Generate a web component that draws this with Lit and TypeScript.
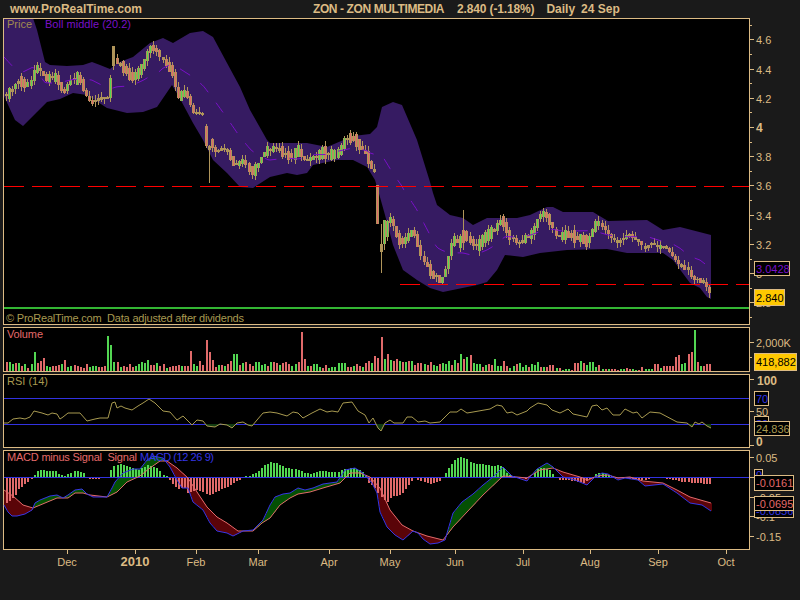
import { LitElement, html, svg, css } from "lit";
import { customElement } from "lit/decorators.js";

type P = [number, number];

const interp = (kp: P[], x: number): number => {
  if (x <= kp[0][0]) return kp[0][1];
  for (let i = 1; i < kp.length; i++) {
    if (x <= kp[i][0]) {
      const [x0, y0] = kp[i - 1];
      const [x1, y1] = kp[i];
      return y0 + ((y1 - y0) * (x - x0)) / (x1 - x0 || 1);
    }
  }
  return kp[kp.length - 1][1];
};

const VOL =
  "9r 9g 7g 8r 8g 5r 7g 3r 7g 19g 8r 10r 13r 5g 4g 5r 5r 6r 7g 11r 4g 5g 6r 5r 4r 3r 7r 4g 5g 5g 4r 4r 5r 35g 26g 9g 9r 4g 5r 4r 7r 4r 5g 7g 9g 8g 11g 6r 6r 8g 5r 7r 3g 4r 5r 5r 6r 5g 5r 5r 20r 7g 5g 10r 6r 31r 19r 11r 4r 6g 6r 5g 7r 10r 17g 17g 6r 8g 9r 7r 5r 9g 9g 6g 7g 5r " +
  "9g 9r 8r 6g 8r 9r 7r 5g 7g 9r 39r 12r 5g 5r 7g 7g 4g 3r 6r 3g 4g 4g 8g 8g 8g 4r 4r 5g 7r 5r 4g 8r 10r 8g 15r 13r 34r 12g 17r 11g 10r 12r 10g 9r 9g 10r 10g 6r 8r 8r 7g 6r 9r 6g 5g 7r 8g 7g 10g 6r 11g 8r 17g 12r 14g 16r 8g 7g 7g 4r 6g 7r 6r 12g 5g 5g 10r 5r 3g 5g 7r 8g 4g 6g 4r 7g 6g 9g " +
  "4r 4g 4r 6r 6r 3g 3r 1g 2g 2g 1r 8r 8r 10g 8r 6g 9g 9g 4g 6r 2g 2r 2g 2r 2r 1r 2g 2g 3r 2r 2g 1g 1r 4r 2g 2g 2g 7r 7r 3g 5r 5r 5r 5r 14r 16r 7g 8g 17r 19r 41g 9r 5g 5r 7r 7r";
const vols = VOL.split(" ").map((s) => ({ h: parseInt(s), c: s.endsWith("g") ? "g" : "r" }));
const N = vols.length;
const barX = (i: number) => Math.round(6 + (i * 703) / (N - 1));

const CLOSE: P[] = [
  [7,95],[10,90],[13,88],[17,80],[20,82],[23,84],[30,85],[34,70],[38,67],[42,74],[45,80],[50,77],[57,78],[60,90],[63,93],[68,82],[75,78],[80,80],[83,90],[87,98],[90,103],[97,99],[103,98],[108,98],[112,57],[117,63],[123,68],[128,75],[133,78],[137,72],[140,70],[145,58],[148,48],[152,47],[157,53],[163,60],[167,67],[172,72],[175,87],[178,98],[183,92],[188,97],[192,113],[197,112],[202,115],[207,133],[212,148],[217,152],[222,147],[227,152],[232,163],[237,165],[242,160],[247,167],[252,172],[258,163],[265,150],
  [270,150],[275,147],[283,154],[290,157],[298,150],[303,160],[313,158],[322,152],[330,155],[338,153],[345,138],[352,138],[358,145],[367,157],[370,168],[375,173],[378,205],[382,248],[385,232],[388,215],[393,226],[397,240],[403,242],[407,236],[413,230],[418,251],[423,260],[427,267],[432,277],[437,274],[439,283],[444,273],[447,261],[450,245],[455,237],[458,246],[462,236],[465,235],[470,241],[477,247],[483,237],[487,235],[492,231],[495,228],[500,220],[504,224],[507,237],[513,238],[517,245],[522,240],[525,238],
  [532,232],[535,226],[538,215],[542,213],[545,215],[550,224],[555,234],[560,237],[565,234],[570,235],[575,238],[580,238],[585,243],[590,236],[593,225],[598,223],[604,228],[610,237],[617,243],[625,236],[630,235],[635,240],[640,242],[643,250],[650,243],[657,247],[665,247],[670,253],[675,260],[680,267],[687,268],[692,279],[698,280],[703,282],[708,290],[710,297],
];

const UPPER: P[] = [
  [4,18],[33,18],[37,30],[41,46],[45,62],[50,65],[67,66],[83,65],[92,62],[100,65],[110,69],[117,63],[133,57],[150,43],[163,38],[173,43],[190,33],[203,31],[213,37],[227,63],[240,87],[250,110],[267,140],[270,143],[307,143],[327,147],[353,136],[370,134],[377,127],[382,107],[393,102],[402,105],[417,140],[430,182],[433,193],[437,205],[450,215],[463,218],[473,225],[487,218],[517,218],[530,215],[547,207],[553,207],[563,212],[593,212],[608,221],[647,220],[663,230],[680,227],[711,235],
];
const LOWER: P[] = [
  [4,96],[15,120],[23,126],[37,112],[47,102],[60,99],[73,93],[87,95],[107,108],[127,113],[143,112],[157,107],[172,85],[178,95],[193,123],[203,140],[213,160],[227,173],[240,187],[253,188],[270,177],[287,173],[297,175],[307,173],[313,165],[337,160],[353,160],[367,167],[375,180],[378,190],[385,215],[393,245],[403,270],[417,280],[430,288],[443,292],[477,285],[487,282],[497,270],[505,255],[523,257],[540,253],[567,250],[607,249],[627,253],[663,253],[673,260],[690,283],[700,288],[707,297],[711,299],
];

const RSI: P[] = [
  [4,423],[8,423],[13,419],[20,418],[25,419],[30,417],[34,411],[42,413],[48,415],[52,413],[57,414],[60,419],[63,417],[68,413],[80,413],[87,421],[95,419],[100,418],[108,418],[112,403],[115,402],[117,408],[121,406],[125,408],[132,410],[138,406],[143,403],[149,399],[155,403],[163,411],[170,412],[177,420],[183,416],[192,425],[197,420],[203,421],[207,426],[215,427],[220,424],[227,425],[232,428],[237,423],[243,422],[248,425],[252,426],[257,420],[263,413],
  [270,412],[277,413],[287,416],[293,412],[298,413],[303,418],[312,413],[320,409],[327,412],[332,411],[338,412],[343,403],[352,402],[358,411],[365,415],[369,423],[373,418],[378,428],[381,431],[385,423],[390,420],[394,423],[403,423],[407,417],[412,417],[418,422],[425,421],[430,423],[440,422],[450,412],[457,412],[461,409],[467,413],[473,412],[490,409],[497,405],[502,406],[507,413],[512,412],[517,415],[527,411],
  [530,408],[538,403],[547,405],[552,410],[560,413],[568,409],[573,414],[587,417],[592,406],[597,405],[602,410],[607,408],[613,415],[620,415],[625,409],[633,413],[637,412],[642,418],[650,412],[660,413],[677,422],[687,423],[692,427],[695,422],[699,424],[702,422],[707,426],[711,428],
];

const MACD: P[] = [
  [4,505],[8,512],[12,516],[17,516],[25,514],[32,510],[35,503],[40,500],[50,496],[57,495],[63,498],[68,495],[75,490],[82,489],[87,494],[93,497],[107,497],[112,488],[115,482],[123,473],[133,469],[140,469],[147,460],[153,456],[163,458],[170,467],[177,480],[182,488],[188,488],[193,502],[203,510],[210,523],[217,531],[227,533],[233,536],[243,531],[253,530],[263,520],[270,505],
  [275,497],[283,494],[290,493],[298,488],[305,490],[313,488],[323,484],[337,482],[345,470],[355,468],[363,473],[372,483],[377,493],[380,512],[387,527],[395,535],[403,540],[413,531],[418,533],[423,539],[430,544],[438,543],[445,540],[453,513],[462,502],[473,494],[483,485],[493,477],[503,467],[512,476],[518,478],[527,481],
  [530,477],[537,469],[547,463],[553,467],[563,477],[575,480],[587,485],[595,477],[602,473],[608,474],[618,480],[625,478],[638,480],[645,486],[663,484],[677,493],[690,503],[702,505],[711,511],
];
const SIGNAL: P[] = [
  [4,490],[13,496],[23,505],[33,508],[45,503],[57,498],[68,498],[75,493],[83,493],[90,495],[107,497],[117,492],[127,482],[140,476],[150,468],[160,461],[167,461],[177,468],[188,478],[197,492],[207,507],[217,517],[227,523],[238,531],[253,531],[262,523],[270,518],
  [280,505],[290,498],[298,494],[310,492],[323,488],[340,483],[350,473],[360,473],[370,477],[380,488],[390,510],[402,525],[413,531],[427,536],[443,540],[453,527],[467,512],[483,495],[503,476],[517,477],[527,478],
  [530,476],[540,470],[553,468],[563,472],[580,477],[588,480],[597,476],[608,475],[618,478],[630,477],[643,481],[663,483],[677,490],[690,497],[711,503],
];
const HIST: P[] = [
  [4,-28],[8,-25],[12,-21],[15,-18],[18,-12],[22,-9],[25,-6],[28,-4],[32,-2],[35,4],[38,7],[42,7],[45,6],[50,6],[55,6],[58,3],[63,1],[68,3],[73,6],[78,6],[83,4],[85,0],[90,-2],[97,-2],[100,-1],[107,0],[112,11],[115,11],[121,13],[126,11],[132,9],[138,7],[147,12],[152,11],[157,8],[163,2],[167,0],[170,-4],[173,-8],[177,-12],[180,-12],[183,-9],[187,-16],[190,-15],[193,-14],[197,-13],[200,-14],[203,-16],[207,-18],[210,-18],[213,-17],[217,-14],[220,-13],[223,-11],[227,-10],[230,-8],[233,-6],[237,-4],[240,-2],[242,0],[243,1],[248,1],[253,3],[257,5],[260,8],[263,12],[268,13],
  [270,15],[275,14],[280,12],[285,9],[295,8],[300,6],[305,4],[310,3],[315,5],[322,6],[328,5],[337,5],[345,8],[353,9],[360,7],[365,2],[368,-6],[373,-9],[377,-16],[382,-21],[387,-25],[392,-19],[397,-19],[402,-16],[407,-9],[412,-3],[415,0],[418,-4],[423,-5],[430,-7],[435,-5],[440,-4],[443,0],[447,7],[450,12],[455,18],[461,20],[467,17],[472,14],[478,13],[487,12],[492,11],[497,12],[502,11],[507,2],[515,0],[518,-1],[527,-2],[532,1],
  [537,8],[540,9],[545,9],[550,6],[553,1],[558,-3],[563,-3],[573,-4],[583,-6],[592,0],[595,3],[600,4],[607,3],[612,0],[623,-1],[640,-3],[645,-3],[653,-1],[663,-1],[673,-3],[683,-5],[693,-6],[710,-7],
];

// Candles whose shape is set by hand: x, wick top, body top, body bottom, wick bottom, colour
const SPECIAL: [number, number, number, number, number, string][] = [
  [112, 46, 46, 66, 70, "t"],
  [206, 124, 126, 146, 148, "r"],
  [209, 145, 146, 150, 183, "t"],
  [378, 185, 185, 224, 224, "r"],
  [381, 224, 244, 252, 273, "t"],
  [385, 220, 220, 244, 250, "g"],
  [462, 210, 230, 243, 250, "r"],
  [708, 284, 287, 293, 298, "r"],
  [711, 292, 297, 298, 299, "t"],
];

let seed = 7;
const rnd = () => {
  seed = (seed * 1103515 + 12345) & 0x7fffffff;
  return (seed >> 8) % 1000 / 1000;
};
const candles = vols.map((_, i) => {
  const x = barX(i);
  const sp = SPECIAL.find((s) => Math.abs(s[0] - x) <= 1);
  if (sp) return { x, wt: sp[1], bt: sp[2], bb: sp[3], wb: sp[4], c: sp[5] };
  const close = interp(CLOSE, x);
  const prev = interp(CLOSE, x - 3);
  // Quiet stretches keep thin bodies; elsewhere a body spans several pixels.
  const quiet = (x > 88 && x < 110) || x > 600;
  const spread = quiet ? 1 + rnd() * 4 : rnd() < 0.3 ? 2 : 4 + rnd() * 9;
  const h = Math.max(Math.abs(close - prev), spread);
  const bt = Math.round((close + prev) / 2 - h / 2);
  const bb = Math.max(bt + 1, Math.round((close + prev) / 2 + h / 2));
  const falling = close > prev + 0.5 || (Math.abs(close - prev) <= 0.5 && rnd() < 0.5);
  const c = bb - bt < 4 ? "t" : falling ? "r" : "g";
  return { x, bt, bb, wt: bt - Math.floor(rnd() * 6), wb: bb + Math.floor(rnd() * 6), c };
});

const bandPts = [...UPPER, ...[...LOWER].reverse()].map((p) => p.join(",")).join(" ");
const midPath = (() => {
  let d = "";
  for (let x = 4; x <= 711; x += 2) {
    d += `${d ? "L" : "M"}${x} ${(interp(UPPER, x) + interp(LOWER, x)) / 2}`;
  }
  return d;
})();
const line = (kp: P[]) => kp.map((p) => p.join(",")).join(" ");
const rsiFill = `4,424 ${line(RSI)} 711,424`;
const fills = (() => {
  let up = "";
  let down = "";
  for (let x = 4; x <= 711; x++) {
    const m = Math.round(interp(MACD, x));
    const s = Math.round(interp(SIGNAL, x));
    if (m < s) up += `M${x + 0.5} ${m}V${s}`;
    else if (m > s) down += `M${x + 0.5} ${s}V${m}`;
  }
  return { up, down };
})();

const priceY = (p: number) => 127 + (4 - p) * 146.2;
const priceTicks = Array.from({ length: 21 }, (_, i) => 2.7 + i * 0.1).filter((p) => p < 4.75);
const priceLabels = ["4.6", "4.4", "4.2", "3.8", "3.6", "3.4", "3.2", "3", "2.8"];
const months: [string, number][] = [
  ["Dec", 67],["2010", 135],["Feb", 196],["Mar", 258],["Apr", 329],["May", 390],["Jun", 455],["Jul", 523],["Aug", 590],["Sep", 658],["Oct", 726],
];
const dashes = (from: number) => {
  const out: number[] = [];
  for (let x = from; x < 749; x += 28) out.push(x);
  return out;
};

@customElement("app-root")
export class AppRoot extends LitElement {
  static styles = css`
    :host {
      display: block;
      width: 800px;
      height: 600px;
      background: #1a1a1a;
      overflow: hidden;
      font-family: "Liberation Sans", Arial, sans-serif;
    }
    header {
      display: flex;
      align-items: center;
      height: 18px;
      padding-left: 10px;
      box-sizing: border-box;
      color: #dcbb84;
      font-size: 12px;
      font-weight: 700;
      white-space: pre;
    }
    .site {
      width: 303px;
    }
    .name {
      letter-spacing: -0.4px;
    }
    .quote {
      margin-left: 13px;
      letter-spacing: -0.15px;
    }
    .period {
      margin-left: 12px;
    }
    .date {
      margin-left: 6px;
    }
    svg {
      display: block;
    }
    .frame {
      fill: #000;
      stroke: #dcbb84;
      stroke-width: 1;
    }
    .tick {
      stroke: #dcbb84;
      stroke-width: 1;
    }
    text {
      font-family: "Liberation Sans", Arial, sans-serif;
      font-size: 11px;
      white-space: pre;
    }
    .ax {
      fill: #dcbb84;
    }
    .strong {
      font-weight: 700;
      font-size: 12px;
    }
    .year {
      font-size: 13px;
    }
    .mid {
      text-anchor: middle;
    }
    .olive {
      fill: #a89a50;
    }
    .tan-dim {
      fill: #a08a50;
    }
    .purple {
      fill: #7a10c8;
    }
    .red {
      fill: #e46a6a;
    }
    .blue {
      fill: #3636e6;
    }
    .black {
      fill: #000;
    }
    .band {
      fill: #361b62;
    }
    .midline {
      fill: none;
      stroke: #7a10c8;
      stroke-width: 1;
      stroke-dasharray: 12 13;
    }
    .wick,
    .body-t,
    .in-t {
      fill: #b0955a;
    }
    .in-g,
    .bar-g {
      fill: #52d652;
    }
    .in-r,
    .bar-r {
      fill: #e06a6a;
    }
    .dash {
      fill: #ff0000;
    }
    .zero {
      fill: #33b533;
    }
    .hline {
      fill: #3232e0;
    }
    .rsi {
      fill: none;
      stroke: #a89a50;
      stroke-width: 1;
    }
    .rsi-fill {
      fill: #123c12;
    }
    .macd {
      fill: none;
      stroke: #3636e6;
      stroke-width: 1;
    }
    .signal {
      fill: none;
      stroke: #e06a6a;
      stroke-width: 1;
    }
    .fill-up {
      fill: none;
      stroke: #045004;
    }
    .fill-down {
      fill: none;
      stroke: #5a0408;
    }
    .box {
      fill: #000;
      stroke: #dcbb84;
    }
    .box-y {
      fill: #ffc800;
      stroke: #dcbb84;
    }
  `;

  private box(x: number, y: number, w: number, h: number, label: string, cls: string, boxCls = "box") {
    return svg`<rect class=${boxCls} x=${x + 0.5} y=${y + 0.5} width=${w} height=${h}></rect>
      <text class=${cls} x=${x + 2} y=${y + h / 2 + 4.5}>${label}</text>`;
  }

  private chart() {
    return svg`
      <rect class="frame" x="3.5" y="18.5" width="746" height="306"></rect>
      <rect class="frame" x="3.5" y="327.5" width="746" height="44"></rect>
      <rect class="frame" x="3.5" y="374.5" width="746" height="73"></rect>
      <rect class="frame" x="3.5" y="450.5" width="746" height="99"></rect>

      <clipPath id="main"><rect x="4" y="19" width="745" height="305"></rect></clipPath>
      <clipPath id="lower30"><rect x="4" y="424" width="745" height="23"></rect></clipPath>

      <g clip-path="url(#main)">
        <polygon class="band" points=${bandPts}></polygon>
        ${candles.map(
          (c) => svg`
            <rect class="wick" x=${c.x} y=${c.wt} width="1" height=${c.wb - c.wt}></rect>
            <rect class="body-t" x=${c.x - 1} y=${c.bt} width="3" height=${c.bb - c.bt}></rect>
            <rect class=${"in-" + c.c} x=${c.x} y=${c.bt} width="1" height=${c.bb - c.bt}></rect>`
        )}
        <path class="midline" d=${midPath}></path>
        ${dashes(4).map((x) => svg`<rect class="dash" x=${x} y="186" width="20" height="1"></rect>`)}
        ${dashes(400).map((x) => svg`<rect class="dash" x=${x} y="284" width="20" height="1"></rect>`)}
        <rect class="zero" x="4" y="307" width="745" height="2"></rect>
      </g>
      <text class="tan-dim" x="7" y="28">Price</text>
      <text class="purple" x="45" y="28" textLength="86">Boll middle (20.2)</text>
      <text class="olive" x="6" y="322" textLength="238">© ProRealTime.com  Data adjusted after dividends</text>

      ${priceTicks.map((p) => {
        const major = Math.round(p * 10) % 2 === 0;
        const y = Math.round(priceY(p)) + 0.5;
        return svg`<line class="tick" x1="750" x2=${major ? 754 : 752} y1=${y} y2=${y}></line>`;
      })}
      ${priceLabels.map((l) => svg`<text class="ax" x="756" y=${Math.round(priceY(parseFloat(l))) + 4.5}>${l}</text>`)}
      <text class="ax strong" x="756" y="131.5">4</text>
      ${this.box(754, 261, 35, 14, "3.0428", "purple")}
      ${this.box(754, 289, 30, 16, "2.840", "black", "box-y")}

      ${vols.map(
        (v, i) => svg`<rect class=${"bar-" + v.c} x=${barX(i)} y=${371 - v.h} width="2" height=${v.h}></rect>`
      )}
      <text class="red" x="7" y="338" textLength="36">Volume</text>
      <line class="tick" x1="750" x2="754" y1="342.5" y2="342.5"></line>
      <line class="tick" x1="750" x2="752" y1="357.5" y2="357.5"></line>
      <text class="ax" x="756" y="346.5">2,000K</text>
      ${this.box(754, 353, 42, 17, "418,882", "black", "box-y")}

      <rect class="hline" x="4" y="398" width="745" height="1"></rect>
      <rect class="hline" x="4" y="424" width="745" height="1"></rect>
      <polygon class="rsi-fill" clip-path="url(#lower30)" points=${rsiFill}></polygon>
      <polyline class="rsi" points=${line(RSI)}></polyline>
      <text class="olive" x="7" y="385">RSI (14)</text>
      <line class="tick" x1="750" x2="754" y1="379.5" y2="379.5"></line>
      <line class="tick" x1="750" x2="754" y1="411.5" y2="411.5"></line>
      <line class="tick" x1="750" x2="754" y1="445.5" y2="445.5"></line>
      <text class="ax strong" x="757" y="384.5">100</text>
      <text class="ax" x="756" y="415.5">50</text>
      <text class="ax strong" x="756" y="445.5">0</text>
      ${this.box(754, 391, 14, 14, "70", "blue")}
      ${this.box(754, 416, 14, 14, "30", "blue")}
      ${this.box(754, 421, 35, 14, "24.836", "olive")}

      <path class="fill-up" d=${fills.up}></path>
      <path class="fill-down" d=${fills.down}></path>
      ${vols.map((_, i) => {
        const h = Math.round(interp(HIST, barX(i)));
        if (!h) return null;
        return svg`<rect class=${h > 0 ? "bar-g" : "bar-r"} x=${barX(i)} y=${h > 0 ? 477 - h : 477} width="2" height=${Math.abs(h)}></rect>`;
      })}
      <rect class="hline" x="4" y="477" width="745" height="1"></rect>
      <polyline class="signal" points=${line(SIGNAL)}></polyline>
      <polyline class="macd" points=${line(MACD)}></polyline>
      <text class="red" x="7" y="461" textLength="130">MACD minus Signal  Signal</text>
      <text class="blue" x="140" y="461" textLength="74">MACD (12 26 9)</text>

      ${[457, 477, 497, 516, 536].map(
        (y) => svg`<line class="tick" x1="750" x2="754" y1=${y + 0.5} y2=${y + 0.5}></line>`
      )}
      <text class="ax" x="756" y="461.5">0.05</text>
      <text class="ax" x="756" y="501.5">-0.05</text>
      <text class="ax" x="756" y="520.5">-0.1</text>
      <text class="ax" x="756" y="540.5">-0.15</text>
      ${this.box(754, 469, 8, 10, "0", "blue")}
      ${this.box(754, 503, 39, 14, "-0.0856", "blue")}
      ${this.box(754, 475, 39, 15, "-0.0161", "red")}
      ${this.box(754, 496, 39, 14, "-0.0695", "red")}

      ${months.map(
        ([m, x]) => svg`
          <line class="tick" x1=${x + 0.5} x2=${x + 0.5} y1="550" y2="554"></line>
          <text class=${"ax mid" + (m === "2010" ? " strong year" : "")} x=${x} y="565.5">${m}</text>`
      )}
    `;
  }

  render() {
    return html`
      <header>
        <span class="site">www.ProRealTime.com</span>
        <span class="name">ZON - ZON MULTIMEDIA</span>
        <span class="quote">2.840 (-1.18%)</span>
        <span class="period">Daily</span>
        <span class="date">24 Sep</span>
      </header>
      <svg width="800" height="582" viewBox="0 18 800 582">${this.chart()}</svg>
    `;
  }
}
